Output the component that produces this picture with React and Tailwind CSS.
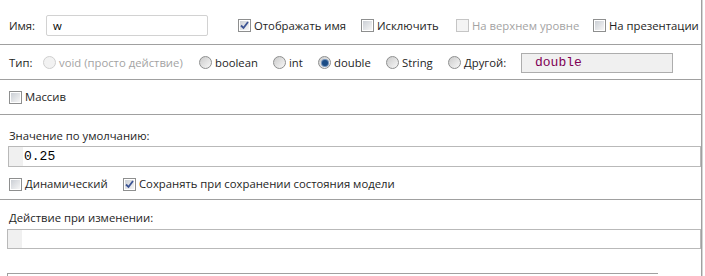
import React from 'react'

const font = { fontFamily: '"Open Sans", "Noto Sans", sans-serif' }

// Windows 7 style checkbox
const Check = ({ checked, disabled }) => (
  <div
    className={`w-[13px] h-[13px] shrink-0 border flex items-center justify-center ${
      disabled ? 'border-[#c5c5c5] bg-[#f4f4f4]' : 'border-[#8e8f8f] bg-white'
    }`}
  >
    <div
      className={`w-[9px] h-[9px] flex items-center justify-center ${
        disabled ? 'bg-[#f4f4f4]' : 'bg-gradient-to-br from-[#cbcfd5] to-[#f6f6f6]'
      }`}
    >
      {checked && (
        <svg width="9" height="9" viewBox="0 0 9 9">
          <path d="M1 4.5 L3.5 7 L8 1" fill="none" stroke="#3c5494" strokeWidth="1.8" />
        </svg>
      )}
    </div>
  </div>
)

const Radio = ({ selected, disabled }) => (
  <div
    className={`w-[13px] h-[13px] shrink-0 rounded-full border flex items-center justify-center ${
      disabled
        ? 'border-[#cfcfcf] bg-[#f2f2f2]'
        : 'border-[#8e8f8f] bg-gradient-to-br from-[#cbcbcb] to-[#f8f8f8]'
    }`}
  >
    {selected && (
      <div className="w-[6px] h-[6px] rounded-full bg-[#1b4c85] ring-1 ring-[#6f8fb8]" />
    )}
  </div>
)

const CheckItem = ({ w, label, checked, disabled }) => (
  <div className={`flex items-center gap-[3px] whitespace-nowrap ${w}`}>
    <Check checked={checked} disabled={disabled} />
    <span className={disabled ? 'text-[#a3a3a3]' : 'text-[#1e1e1e]'}>{label}</span>
  </div>
)

const RadioItem = ({ w, label, selected, disabled }) => (
  <div className={`flex items-center gap-[3px] whitespace-nowrap ${w}`}>
    <Radio selected={selected} disabled={disabled} />
    <span className={disabled ? 'text-[#a3a3a3]' : 'text-[#1e1e1e]'}>{label}</span>
  </div>
)

export default function App() {
  return (
    <div className="w-[705px] h-[276px] bg-white flex text-[11.3px] leading-[16px] overflow-hidden" style={font}>
      <div className="w-[701px] flex flex-col">
        {/* name row */}
        <div className="h-[45px] border-b border-[#a0a0a0] pt-[15px]">
          <div className="flex items-center h-[21px]">
            <span className="pl-[9px] w-[46px] text-[#1e1e1e]">Имя:</span>
            <div className="w-[162px] h-[21px] border border-[#d2d2d2] rounded-[2px] flex items-center pl-[6px] text-black">w</div>
            <div className="w-[30px]" />
            <CheckItem w="w-[123px]" label="Отображать имя" checked />
            <CheckItem w="w-[95px]" label="Исключить" />
            <CheckItem w="w-[137px]" label="На верхнем уровне" disabled />
            <CheckItem w="" label="На презентации" />
          </div>
        </div>

        {/* type row */}
        <div className="h-[35px] border-b border-[#a0a0a0] pt-[7px]">
          <div className="flex items-center h-[21px]">
            <span className="pl-[9px] w-[43px] text-[#1e1e1e]">Тип:</span>
            <RadioItem w="w-[156px]" label="void (просто действие)" disabled />
            <RadioItem w="w-[74px]" label="boolean" />
            <RadioItem w="w-[45px]" label="int" />
            <RadioItem w="w-[68px]" label="double" selected />
            <RadioItem w="w-[62px]" label="String" />
            <RadioItem w="w-[73px]" label="Другой:" />
            <div
              className="w-[152px] h-[20px] border border-[#adadad] bg-[#f0f0f0] flex items-center pl-[13px] text-[13px] text-[#7f0055]"
              style={{ fontFamily: '"Liberation Mono", monospace' }}
            >
              double
            </div>
          </div>
        </div>

        {/* array row */}
        <div className="h-[35px] border-b border-[#a0a0a0] flex items-center pl-[9px]">
          <CheckItem w="" label="Массив" />
        </div>

        {/* default value */}
        <div className="h-[85px] border-b border-[#a0a0a0] pt-[13px]">
          <div className="pl-[9px] text-[#1e1e1e]">Значение по умолчанию:</div>
          <div className="mt-[2px] ml-[8px] h-[21px] border border-[#b9b9b9] flex">
            <div className="w-[14px] bg-[#f0f0f0]" />
            <div
              className="flex items-center text-[13px] pl-[1px] text-black"
              style={{ fontFamily: '"Liberation Mono", monospace' }}
            >
              0.25
            </div>
          </div>
          <div className="mt-[9px] flex items-center pl-[9px] h-[16px]">
            <CheckItem w="w-[114px]" label="Динамический" />
            <CheckItem w="" label="Сохранять при сохранении состояния модели" checked />
          </div>
        </div>

        {/* on change */}
        <div className="h-[73px] pt-[10px]">
          <div className="pl-[9px] text-[#1e1e1e]">Действие при изменении:</div>
          <div className="mt-[3px] ml-[7px] h-[20px] border border-[#b9b9b9] flex">
            <div className="w-[14px] bg-[#f0f0f0]" />
          </div>
        </div>
        <div className="ml-[7px] w-[651px] h-[3px] border-t border-l border-[#a0a0a0]" />
      </div>
      <div className="w-[1px] bg-[#a0a0a0]" />
      <div className="w-[1px] bg-[#d5d5d5]" />
    </div>
  )
}
